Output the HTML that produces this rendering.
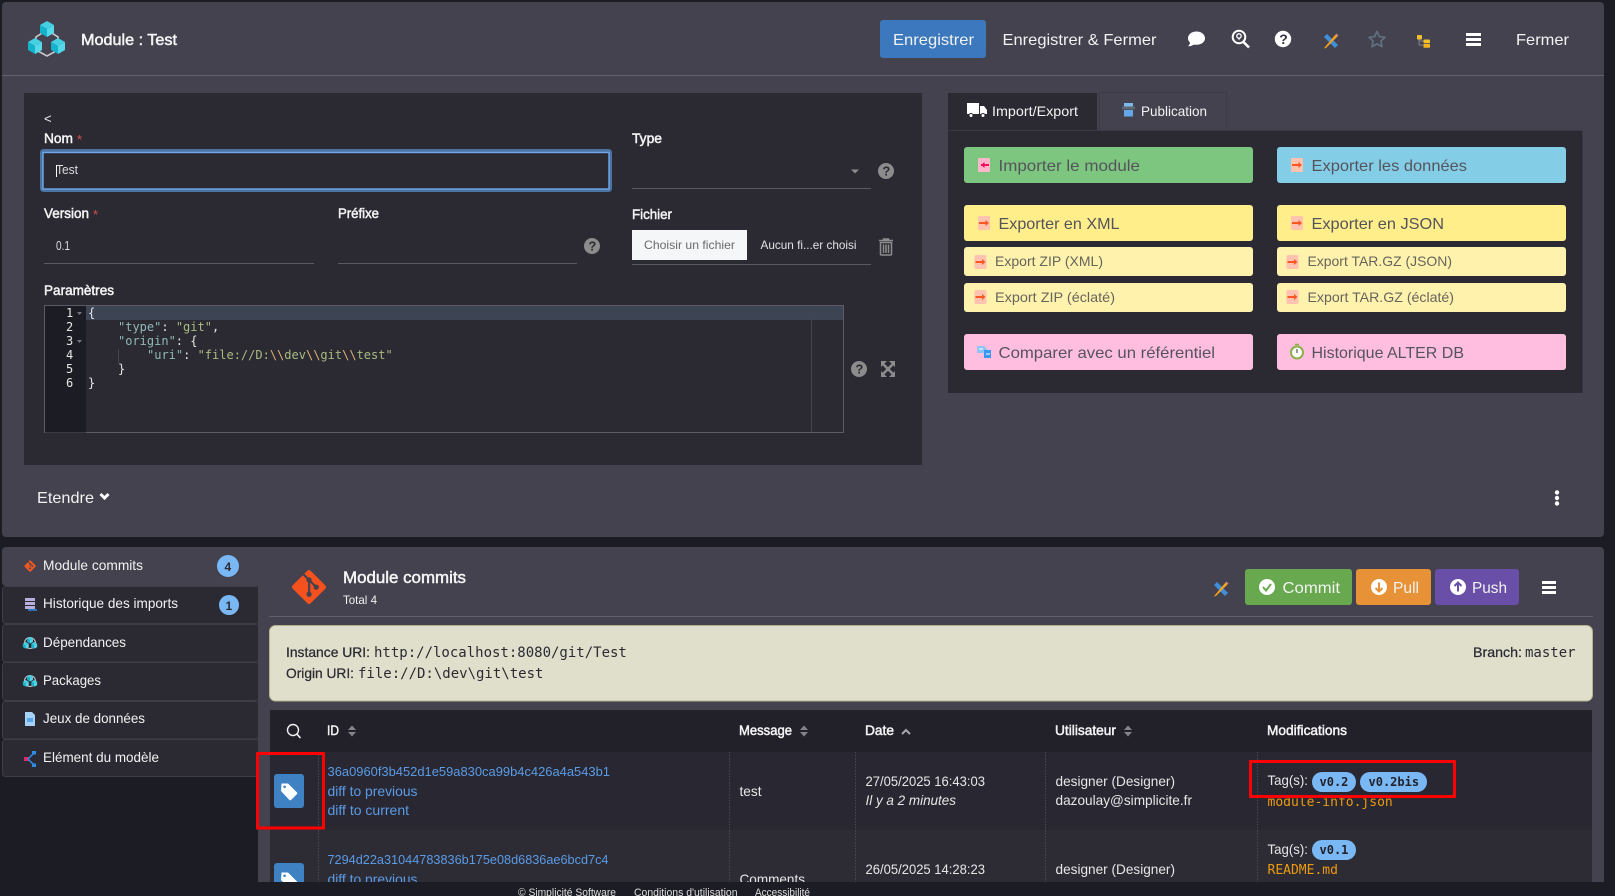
<!DOCTYPE html>
<html lang="fr"><head><meta charset="utf-8"><title>Module : Test</title>
<style>
html,body{margin:0;padding:0;background:#1c1c24;width:1615px;height:896px;overflow:hidden}
svg{display:block}
text{font-family:"Liberation Sans",sans-serif;font-size:14px;fill:#e6e6e6;white-space:pre}
.s{stroke:currentColor;stroke-width:.5px;color:#f4f4f4;fill:#f4f4f4}
.w{fill:#f2f2f2}
.l{fill:#5a9be6;font-size:14px}
.m{font-family:"DejaVu Sans Mono","Liberation Mono",monospace}
.c{font-family:"DejaVu Sans Mono","Liberation Mono",monospace;font-size:12px}
.d{fill:#55545c;font-size:16px}
.d2{fill:#66655c;font-size:14px}
</style></head><body>
<svg xmlns="http://www.w3.org/2000/svg" width="1615" height="896" viewBox="0 0 1615 896">
<defs>
<path id="git" d="M92.71 44.408 52.591 4.291c-2.31-2.311-6.057-2.311-8.369 0l-8.33 8.332L46.459 23.19c2.456-.83 5.272-.273 7.229 1.685 1.969 1.97 2.521 4.81 1.67 7.275l10.186 10.185c2.465-.85 5.307-.3 7.275 1.671 2.75 2.75 2.75 7.206 0 9.958-2.752 2.751-7.208 2.751-9.961 0-2.068-2.07-2.58-5.11-1.531-7.658l-9.5-9.499v24.997c.67.332 1.303.774 1.861 1.332 2.75 2.75 2.75 7.206 0 9.959-2.75 2.749-7.209 2.749-9.957 0-2.75-2.754-2.75-7.21 0-9.959.68-.679 1.467-1.193 2.307-1.537v-25.23c-.84-.344-1.625-.853-2.307-1.537-2.083-2.082-2.584-5.14-1.516-7.698L31.798 16.715 4.288 44.222c-2.311 2.313-2.311 6.06 0 8.371l40.121 40.118c2.31 2.311 6.056 2.311 8.369 0L92.71 52.779c2.311-2.311 2.311-6.06 0-8.371z"/>
<g id="cube"><path d="M0-8 7-4 0 0-7-4Z" fill="#45cfe3"/><path d="M-7-4 0 0V8L-7 4Z" fill="#14b3cc"/><path d="M7-4 0 0V8L7 4Z" fill="#55d9ea"/></g>
<g id="mini"><circle r="5.500" fill="none" stroke="#c4c4c8" stroke-width="1.100"/><use href="#cube" transform="translate(0,-2.800) scale(.42)"/><use href="#cube" transform="translate(-4.200,2.400) scale(.42)"/><use href="#cube" transform="translate(4.200,2.400) scale(.42)"/></g>
<g id="pencil"><path d="M-7-4-4-7 7 4 4 7Z" fill="#3f8fdc"/><path d="M-6 6-7 7.5-5 7 6.5-4.5 4.5-6.5-6 6Z" fill="#f5a21f"/><path d="M4.5-6.5 5.5-7.5 7.5-5.5 6.5-4.5Z" fill="#c98a86"/></g>
<g id="exr"><rect x="-6" y="-7" width="12" height="14" rx="1.5" fill="#ffc3b0"/><path d="M-5 0H4" stroke="#ff5722" stroke-width="2"/><path d="M1.5-3 5 0 1.5 3Z" fill="#ff5722"/></g>
<g id="tagb"><rect x="274" y="774" width="30" height="34" rx="3" fill="#3f82c4"/><path d="M281.5 783.5 288 783.5 297 792.5Q297.6 793.4 297 794L291 800Q290 800.6 289.4 800L281 791Z" fill="#fff"/><circle cx="284.6" cy="786.8" r="1.3" fill="#3f82c4"/></g>
<g id="help"><circle r="8" fill="#8c8c8c"/><text x="-3.6" y="4.6" style="font-size:13px;font-weight:700;fill:#2b2a33">?</text></g>
<g id="sort"><path d="M-4-1 0-5.5 4-1Z M-4 1 0 5.5 4 1Z" fill="#85848c"/></g>
<clipPath id="main"><rect x="258" y="547" width="1346" height="335"/></clipPath>
</defs>

<rect width="1615" height="896" fill="#1c1c24"/>

<!-- top panel -->
<rect x="2" y="2" width="1602" height="535" rx="4" fill="#43424e"/>
<rect x="2" y="75" width="1602" height="1" fill="#61606b"/>

<path d="M47 30 58 37V50L47 56 36 50V37Z" fill="none" stroke="#c9c9cc" stroke-width="1.6"/>
<use href="#cube" transform="translate(47,29)"/><use href="#cube" transform="translate(35,46)"/><use href="#cube" transform="translate(58,46)"/>
<text x="81" y="45" class="s" style="font-size:16px" textLength="96" lengthAdjust="spacingAndGlyphs">Module : Test</text>

<rect x="880" y="20" width="106" height="38" rx="3" fill="#3b78bd"/>
<text x="893" y="45" class="w" style="font-size:16px" textLength="81" lengthAdjust="spacingAndGlyphs">Enregistrer</text>
<text x="1002.5" y="45" class="w" style="font-size:16px" textLength="154" lengthAdjust="spacingAndGlyphs">Enregistrer &amp; Fermer</text>

<path d="M1196.500 31.500C1201.500 31.500 1205 34.500 1205 38.300 1205 42 1201.500 44.800 1196.500 44.800L1193.500 44.700C1192 45.800 1190 46.400 1188 46.200 1189.300 45 1190 43.800 1190.100 42.800 1188.700 41.500 1188 40 1188 38.300 1188 34.500 1191.500 31.500 1196.500 31.500Z" fill="#fff"/>
<g transform="translate(1,0)"><circle cx="1238" cy="37" r="6.3" fill="none" stroke="#fff" stroke-width="2"/><path d="M1242.5 42 1248 47.5" stroke="#fff" stroke-width="2.6"/><circle cx="1238" cy="36" r="2.2" fill="none" stroke="#fff" stroke-width="1.3"/><path d="M1236.6 37.5 1238 40.5 1239.4 37.5Z" fill="#fff"/></g>
<circle cx="1283" cy="39" r="8.2" fill="#fff"/><text x="1279.2" y="44" style="font-size:14px;font-weight:700;fill:#33323c">?</text>
<use href="#pencil" transform="translate(1331,41)"/>
<path d="M1377 31.5 1379.4 36.6 1385 37.3 1380.9 41.1 1382 46.7 1377 43.9 1372 46.7 1373.1 41.1 1369 37.3 1374.6 36.6Z" fill="none" stroke="#5f7080" stroke-width="1.7" stroke-linejoin="round"/>
<path d="M1419 39V45H1424M1419 41H1424" stroke="#80808a" fill="none"/><rect x="1417" y="35" width="5" height="4.5" rx=".8" fill="#f3c02b"/><rect x="1423.5" y="39.5" width="6.5" height="3.8" rx=".8" fill="#f3c02b"/><rect x="1423.5" y="44" width="6.5" height="3.8" rx=".8" fill="#f3b41f"/>
<path d="M1466 33h15v3h-15zM1466 38h15v3h-15zM1466 43h15v3h-15z" fill="#fff"/>
<text x="1516" y="45" class="w" style="font-size:16px" textLength="53" lengthAdjust="spacingAndGlyphs">Fermer</text>

<!-- form card -->
<rect x="24" y="93" width="898" height="372" fill="#2b2a33"/>
<text x="44" y="123" class="w" style="font-size:13px">&lt;</text>
<text x="44" y="143" class="s" textLength="29" lengthAdjust="spacingAndGlyphs">Nom</text>
<text x="77" y="144" style="font-size:13px;fill:#d9534f">*</text>
<rect x="41.5" y="150.5" width="569" height="40" rx="2" fill="#2b2a33" stroke="#4b74a3" stroke-width="3"/>
<rect x="43" y="152.5" width="566" height="36.5" fill="none" stroke="#6fa9ea" stroke-width="1.4"/>
<text x="56" y="174" style="font-size:13px;fill:#ddd" textLength="22" lengthAdjust="spacingAndGlyphs">Test</text>
<rect x="56" y="165" width="1" height="12" fill="#fff"/>

<text x="632" y="143" class="s" textLength="30" lengthAdjust="spacingAndGlyphs">Type</text>
<rect x="632" y="188" width="239" height="1" fill="#5a5964"/>
<path d="M851 169.500h8l-4 4z" fill="#8c8c8c"/>
<use href="#help" transform="translate(886,171)"/>

<text x="44" y="218" class="s" textLength="45" lengthAdjust="spacingAndGlyphs">Version</text>
<text x="93" y="219" style="font-size:13px;fill:#d9534f">*</text>
<text x="338" y="218" class="s" textLength="41" lengthAdjust="spacingAndGlyphs">Préfixe</text>
<text x="56" y="250" style="font-size:13px;fill:#ddd" textLength="14" lengthAdjust="spacingAndGlyphs">0.1</text>
<rect x="44" y="263" width="270" height="1" fill="#5a5964"/>
<rect x="338" y="263" width="239" height="1" fill="#5a5964"/>
<use href="#help" transform="translate(592,246)"/>

<text x="632" y="219" class="s" textLength="40" lengthAdjust="spacingAndGlyphs">Fichier</text>
<rect x="632" y="230" width="115" height="30" fill="#f5f6f8"/>
<text x="644" y="249" style="font-size:12px;fill:#6a6a6a" textLength="91" lengthAdjust="spacingAndGlyphs">Choisir un fichier</text>
<text x="760.500" y="249" style="font-size:12px;fill:#e2e2e2" textLength="96" lengthAdjust="spacingAndGlyphs">Aucun fi...er choisi</text>
<rect x="632" y="264" width="239" height="1" fill="#5a5964"/>
<path d="M879 240.500h14M883.500 240.500V239h5v1.500M880.500 242.500h11v11.500a1 1 0 0 1-1 1h-9a1 1 0 0 1-1-1zM883.500 244.500v8.500M886 244.500v8.500M888.500 244.500v8.500" fill="none" stroke="#8c8c8c" stroke-width="1.500"/>

<text x="44" y="295" class="s" textLength="70" lengthAdjust="spacingAndGlyphs">Paramètres</text>

<rect x="44.500" y="305.500" width="799" height="127" fill="#2b2a33" stroke="#5b5a66"/>
<rect x="45" y="306" width="41" height="126.500" fill="#1c1c24"/>
<rect x="86" y="306" width="757" height="14" fill="#3d4555"/>
<rect x="811" y="306" width="1" height="126" fill="#44434e"/>
<rect x="118" y="349" width="1" height="14" fill="#44434e"/>
<g>
<text x="66" y="317" class="c">1</text><text x="66" y="331" class="c">2</text><text x="66" y="345" class="c">3</text><text x="66" y="359" class="c">4</text><text x="66" y="373" class="c">5</text><text x="66" y="387" class="c">6</text>
<path d="M77 312h5l-2.500 3zM77 340h5l-2.500 3z" fill="#777"/>
<text x="88" y="317" class="c">{</text>
<text x="118" y="331" class="c" style="fill:#8fb8b8">"type"<tspan style="fill:#e6e6e6">: </tspan><tspan style="fill:#a8bb80">"git"</tspan><tspan style="fill:#e6e6e6">,</tspan></text>
<text x="118" y="345" class="c" style="fill:#8fb8b8">"origin"<tspan style="fill:#e6e6e6">: {</tspan></text>
<text x="147" y="359" class="c" style="fill:#8fb8b8">"uri"<tspan style="fill:#e6e6e6">: </tspan><tspan style="fill:#a8bb80">"file://D:</tspan><tspan style="fill:#e0b070">\\</tspan><tspan style="fill:#a8bb80">dev</tspan><tspan style="fill:#e0b070">\\</tspan><tspan style="fill:#a8bb80">git</tspan><tspan style="fill:#e0b070">\\</tspan><tspan style="fill:#a8bb80">test"</tspan></text>
<text x="118" y="373" class="c">}</text>
<text x="88" y="387" class="c">}</text>
</g>
<use href="#help" transform="translate(859,369)"/>
<path d="M882 363 894 375M894 363 882 375" stroke="#8c8c8c" stroke-width="2.500"/><path d="M881 361h6l-6 6zM895 361h-6l6 6zM881 377h6l-6-6zM895 377h-6l6-6z" fill="#8c8c8c"/>

<text x="37" y="503" class="w" style="font-size:16px" textLength="57" lengthAdjust="spacingAndGlyphs">Etendre</text>
<path d="M100.500 494 104.500 498 108.500 494" fill="none" stroke="#fff" stroke-width="3"/>
<circle cx="1557" cy="492.500" r="2.200" fill="#fff"/><circle cx="1557" cy="498" r="2.200" fill="#fff"/><circle cx="1557" cy="503.500" r="2.200" fill="#fff"/>

<!-- tabs right -->
<rect x="1099.500" y="92.500" width="127" height="38" fill="#43424e" stroke="#3c3b46"/>
<rect x="948" y="93" width="149" height="37" fill="#2b2a33"/>
<rect x="948" y="130" width="634.500" height="263" fill="#2b2a33"/>
<rect x="948" y="130" width="634.500" height="1" fill="#3a3944"/>
<path d="M967 103h12v11h-12zM980 106h4l3 4v4h-7z" fill="#fff"/><circle cx="971" cy="115.500" r="2" fill="#fff" stroke="#2b2a33"/><circle cx="983" cy="115.500" r="2" fill="#fff" stroke="#2b2a33"/>
<text x="992" y="116" class="w" textLength="86" lengthAdjust="spacingAndGlyphs">Import/Export</text>
<rect x="1124" y="103" width="9" height="3.500" fill="#7fb8ea"/><rect x="1122" y="106.500" width="13" height="3" fill="#5d6770"/><rect x="1124" y="110" width="9" height="6.500" fill="#62a8ea"/>
<text x="1141" y="116" class="w" textLength="66" lengthAdjust="spacingAndGlyphs">Publication</text>

<!-- action buttons -->
<rect x="964" y="147" width="289" height="36" rx="3" fill="#7dc67f"/>
<rect x="1277" y="147" width="289" height="36" rx="3" fill="#84cde6"/>
<rect x="964" y="205" width="289" height="36" rx="3" fill="#ffee8a"/>
<rect x="1277" y="205" width="289" height="36" rx="3" fill="#ffee8a"/>
<rect x="964" y="247" width="289" height="29" rx="3" fill="#fff2ad"/>
<rect x="1277" y="247" width="289" height="29" rx="3" fill="#fff2ad"/>
<rect x="964" y="283" width="289" height="29" rx="3" fill="#fff2ad"/>
<rect x="1277" y="283" width="289" height="29" rx="3" fill="#fff2ad"/>
<rect x="964" y="334" width="289" height="36" rx="3" fill="#ffbde0"/>
<rect x="1277" y="334" width="289" height="36" rx="3" fill="#ffbde0"/>

<rect x="978" y="158" width="12" height="14" rx="1.500" fill="#ffb5cc"/><path d="M981 165h8" stroke="#f01060" stroke-width="2"/><path d="M984.500 162 981 165 984.500 168Z" fill="#f01060"/>
<use href="#exr" transform="translate(1297,165)"/>
<use href="#exr" transform="translate(984,223)"/><use href="#exr" transform="translate(1297,223)"/>
<use href="#exr" transform="translate(980.500,262)"/><use href="#exr" transform="translate(1292.500,262)"/>
<use href="#exr" transform="translate(980.500,297)"/><use href="#exr" transform="translate(1292.500,297)"/>
<path d="M977 346h7l3 3v4h-10z" fill="#8ec5f5"/><path d="M984 350h7v8h-7z" fill="#3a97ee"/><path d="M979 349h4M986 354h4" stroke="#fff"/>
<circle cx="1297" cy="352.500" r="6" fill="#fff" stroke="#8bb04a" stroke-width="2"/><path d="M1295 344.500h4" stroke="#8bb04a" stroke-width="1.500"/><path d="M1297 349v4" stroke="#333"/>

<text x="998.500" y="171" class="d" textLength="141.500" lengthAdjust="spacingAndGlyphs">Importer le module</text>
<text x="1311.500" y="171" class="d" textLength="155.500" lengthAdjust="spacingAndGlyphs">Exporter les données</text>
<text x="998.500" y="229" class="d" textLength="121" lengthAdjust="spacingAndGlyphs">Exporter en XML</text>
<text x="1311.500" y="229" class="d" textLength="132.500" lengthAdjust="spacingAndGlyphs">Exporter en JSON</text>
<text x="995" y="266" class="d2" textLength="108" lengthAdjust="spacingAndGlyphs">Export ZIP (XML)</text>
<text x="1307.500" y="266" class="d2" textLength="144.500" lengthAdjust="spacingAndGlyphs">Export TAR.GZ (JSON)</text>
<text x="995" y="302" class="d2" textLength="120" lengthAdjust="spacingAndGlyphs">Export ZIP (éclaté)</text>
<text x="1307.500" y="302" class="d2" textLength="146.500" lengthAdjust="spacingAndGlyphs">Export TAR.GZ (éclaté)</text>
<text x="998.500" y="358" class="d" textLength="216.500" lengthAdjust="spacingAndGlyphs">Comparer avec un référentiel</text>
<text x="1311.500" y="358" class="d" textLength="152.500" lengthAdjust="spacingAndGlyphs">Historique ALTER DB</text>

<!-- bottom left tabs -->
<path d="M2 551a4 4 0 0 1 4-4H258V586H6a4 4 0 0 1-4-4z" fill="#43424e"/>
<rect x="2.500" y="586.500" width="256" height="37" rx="3" fill="#2b2a33" stroke="#3d3c47"/>
<rect x="2.500" y="624.500" width="256" height="37.500" rx="3" fill="#2b2a33" stroke="#3d3c47"/>
<rect x="2.500" y="662.500" width="256" height="38" rx="3" fill="#2b2a33" stroke="#3d3c47"/>
<rect x="2.500" y="701.500" width="256" height="37.500" rx="3" fill="#2b2a33" stroke="#3d3c47"/>
<rect x="2.500" y="739.500" width="256" height="37" rx="3" fill="#2b2a33" stroke="#3d3c47"/>

<use href="#git" transform="translate(24,560) scale(.125)" fill="#f05a22"/>
<rect x="25" y="598" width="10" height="3" fill="#b8aede"/><rect x="25" y="602" width="10" height="3" fill="#b8aede"/><rect x="25" y="606" width="10" height="3" fill="#b8aede"/><path d="M28 610h9" stroke="#2d8ce6" stroke-width="1.500"/>
<use href="#mini" transform="translate(30,643)"/>
<use href="#mini" transform="translate(30,681)"/>
<path d="M25 712h7l3 3v11H25z" fill="#a7d2f7"/><rect x="27" y="718" width="6" height="4" fill="#5aa6ea"/>
<rect x="24" y="757" width="5" height="4" fill="#e0286e"/><path d="M28 759 34 753M28 759 34 765" stroke="#2d8ce6" stroke-width="1.500"/><rect x="32" y="751" width="4" height="3.500" fill="#2d8ce6"/><rect x="32" y="763.500" width="4" height="3.500" fill="#2d8ce6"/>

<text x="43" y="570" class="w" textLength="100" lengthAdjust="spacingAndGlyphs">Module commits</text>
<text x="43" y="608" class="w" textLength="135" lengthAdjust="spacingAndGlyphs">Historique des imports</text>
<text x="43" y="647" class="w" textLength="83" lengthAdjust="spacingAndGlyphs">Dépendances</text>
<text x="43" y="685" class="w" textLength="58" lengthAdjust="spacingAndGlyphs">Packages</text>
<text x="43" y="723" class="w" textLength="102" lengthAdjust="spacingAndGlyphs">Jeux de données</text>
<text x="43" y="762" class="w" textLength="116" lengthAdjust="spacingAndGlyphs">Elément du modèle</text>

<circle cx="228" cy="566" r="11" fill="#7ab8f5"/><text x="224.500" y="571" style="font-size:12px;font-weight:700;fill:#2b2a33">4</text>
<circle cx="229" cy="605" r="10" fill="#7ab8f5"/><text x="225.500" y="610" style="font-size:12px;font-weight:700;fill:#2b2a33">1</text>

<!-- main bottom panel -->
<path d="M258 547H1600a4 4 0 0 1 4 4V882H258z" fill="#43424e"/>
<use href="#git" transform="translate(291,569) scale(.371)" fill="#f4511e"/>
<text x="343" y="583" class="s" style="font-size:17px" textLength="123" lengthAdjust="spacingAndGlyphs">Module commits</text>
<text x="343" y="604" class="w" style="font-size:12px" textLength="34" lengthAdjust="spacingAndGlyphs">Total 4</text>
<rect x="269" y="616" width="1324" height="1" fill="#61606b"/>
<use href="#pencil" transform="translate(1221,589)"/>

<rect x="1245" y="569" width="107" height="36" rx="3" fill="#68a94f"/>
<rect x="1356" y="569" width="75" height="36" rx="3" fill="#e89237"/>
<rect x="1435" y="569" width="84" height="36" rx="3" fill="#6a4fa8"/>
<circle cx="1267" cy="587" r="8" fill="#fff"/><path d="M1263 587 1266 590.500 1271 584" fill="none" stroke="#68a94f" stroke-width="2"/>
<text x="1282.500" y="593" class="w" style="font-size:16px" textLength="57.500" lengthAdjust="spacingAndGlyphs">Commit</text>
<circle cx="1379" cy="587" r="8" fill="#fff"/><path d="M1379 582.500V591M1375.500 588 1379 591.500 1382.500 588" fill="none" stroke="#e89237" stroke-width="2"/>
<text x="1393" y="593" class="w" style="font-size:16px" textLength="26" lengthAdjust="spacingAndGlyphs">Pull</text>
<circle cx="1458" cy="587" r="8" fill="#fff"/><path d="M1458 591.500V583M1454.500 586 1458 582.500 1461.500 586" fill="none" stroke="#6a4fa8" stroke-width="2"/>
<text x="1472" y="593" class="w" style="font-size:16px" textLength="35" lengthAdjust="spacingAndGlyphs">Push</text>
<path d="M1542 581h14v3h-14zM1542 586h14v3h-14zM1542 591h14v3h-14z" fill="#fff"/>

<rect x="269.500" y="625.500" width="1323" height="75.500" rx="6" fill="#e0dfcc" stroke="#b5b38d"/>
<text x="286" y="657" class="s" style="fill:#2b2a33;color:#2b2a33;stroke-width:.25px" textLength="84" lengthAdjust="spacingAndGlyphs">Instance URI:</text>
<text x="374" y="657" class="m" style="fill:#2b2a33">http://localhost:8080/git/Test</text>
<text x="286" y="678" class="s" style="fill:#2b2a33;color:#2b2a33;stroke-width:.25px" textLength="68" lengthAdjust="spacingAndGlyphs">Origin URI:</text>
<text x="358" y="678" class="m" style="fill:#2b2a33">file://D:\dev\git\test</text>
<text x="1473" y="657" class="s" style="fill:#2b2a33;color:#2b2a33;stroke-width:.25px" textLength="49" lengthAdjust="spacingAndGlyphs">Branch:</text>
<text x="1525" y="657" class="m" style="fill:#2b2a33">master</text>

<!-- table -->
<rect x="270" y="710" width="1322" height="42" fill="#22212a"/>
<g clip-path="url(#main)">
<rect x="270" y="752" width="1322" height="78" fill="#292832"/>
<rect x="270" y="830" width="1322" height="52" fill="#2d2c35"/>
<path d="M318.500 752V882M729.500 752V882M855.500 752V882M1045.500 752V882M1257.500 752V882" stroke="#4a4954" stroke-dasharray="1.500 1.500"/>
<use href="#tagb"/><use href="#tagb" y="89"/>
<text x="327.500" y="776" class="l" style="font-size:13px" textLength="282.500" lengthAdjust="spacingAndGlyphs">36a0960f3b452d1e59a830ca99b4c426a4a543b1</text>
<text x="327.500" y="796" class="l" textLength="90" lengthAdjust="spacingAndGlyphs">diff to previous</text>
<text x="327.500" y="815" class="l" textLength="81.500" lengthAdjust="spacingAndGlyphs">diff to current</text>
<text x="327.500" y="864" class="l" style="font-size:13px" textLength="281" lengthAdjust="spacingAndGlyphs">7294d22a31044783836b175e08d6836ae6bcd7c4</text>
<text x="327.500" y="884" class="l" textLength="90" lengthAdjust="spacingAndGlyphs">diff to previous</text>
<text x="739.500" y="796" textLength="22" lengthAdjust="spacingAndGlyphs">test</text>
<text x="739.500" y="884" textLength="65.500" lengthAdjust="spacingAndGlyphs">Comments</text>
<text x="865.500" y="786" textLength="119.500" lengthAdjust="spacingAndGlyphs">27/05/2025 16:43:03</text>
<text x="865.500" y="805" style="font-style:italic" textLength="90.500" lengthAdjust="spacingAndGlyphs">Il y a 2 minutes</text>
<text x="865.500" y="874" textLength="119.500" lengthAdjust="spacingAndGlyphs">26/05/2025 14:28:23</text>
<text x="1055.500" y="786" textLength="119.500" lengthAdjust="spacingAndGlyphs">designer (Designer)</text>
<text x="1055.500" y="805" textLength="136.500" lengthAdjust="spacingAndGlyphs">dazoulay@simplicite.fr</text>
<text x="1055.500" y="874" textLength="119.500" lengthAdjust="spacingAndGlyphs">designer (Designer)</text>
<text x="1267.500" y="785" textLength="40.500" lengthAdjust="spacingAndGlyphs">Tag(s):</text>
<text x="1267.500" y="806" class="m" style="font-size:13px;fill:#ee9a10">module-info.json</text>
<text x="1267.500" y="854" textLength="40.500" lengthAdjust="spacingAndGlyphs">Tag(s):</text>
<text x="1267.500" y="874" class="m" style="font-size:13px;fill:#ee9a10">README.md</text>
</g>
<rect x="1312" y="772" width="44" height="20" rx="10" fill="#7ab8f5"/><rect x="1360" y="772" width="67" height="20" rx="10" fill="#7ab8f5"/><rect x="1312" y="840" width="44" height="20" rx="10" fill="#7ab8f5"/>
<text x="1319.500" y="786" class="m" style="font-size:12px;font-weight:700;fill:#22212a">v0.2</text>
<text x="1368.500" y="786" class="m" style="font-size:12px;font-weight:700;fill:#22212a">v0.2bis</text>
<text x="1319.500" y="854" class="m" style="font-size:12px;font-weight:700;fill:#22212a">v0.1</text>

<circle cx="293" cy="730" r="5.500" fill="none" stroke="#f2f2f2" stroke-width="1.400"/><path d="M297 734.200 300.500 738" stroke="#f2f2f2" stroke-width="1.600"/>
<text x="327" y="735" class="s" textLength="12" lengthAdjust="spacingAndGlyphs">ID</text><use href="#sort" transform="translate(352,731)"/>
<text x="739" y="735" class="s" textLength="53" lengthAdjust="spacingAndGlyphs">Message</text><use href="#sort" transform="translate(804,731)"/>
<text x="865" y="735" class="s" textLength="29" lengthAdjust="spacingAndGlyphs">Date</text><path d="M902 734 906 730 910 734" fill="none" stroke="#a8a8ae" stroke-width="2"/>
<text x="1055" y="735" class="s" textLength="61" lengthAdjust="spacingAndGlyphs">Utilisateur</text><use href="#sort" transform="translate(1128,731)"/>
<text x="1267" y="735" class="s" textLength="80" lengthAdjust="spacingAndGlyphs">Modifications</text>

<!-- annotations -->
<rect x="257.500" y="753.500" width="66" height="74.500" fill="none" stroke="#f00" stroke-width="3"/>
<rect x="1250.500" y="761.500" width="204" height="35" fill="none" stroke="#f00" stroke-width="3"/>

<!-- footer -->
<rect x="0" y="882" width="1615" height="14" fill="#1c1c24"/>
<text x="518" y="896" style="font-size:11px;fill:#ddd" textLength="98" lengthAdjust="spacingAndGlyphs">© Simplicité Software</text>
<text x="634" y="896" style="font-size:11px;fill:#ddd" textLength="103.500" lengthAdjust="spacingAndGlyphs">Conditions d'utilisation</text>
<text x="755" y="896" style="font-size:11px;fill:#ddd" textLength="55" lengthAdjust="spacingAndGlyphs">Accessibilité</text>
</svg>
</body></html>
